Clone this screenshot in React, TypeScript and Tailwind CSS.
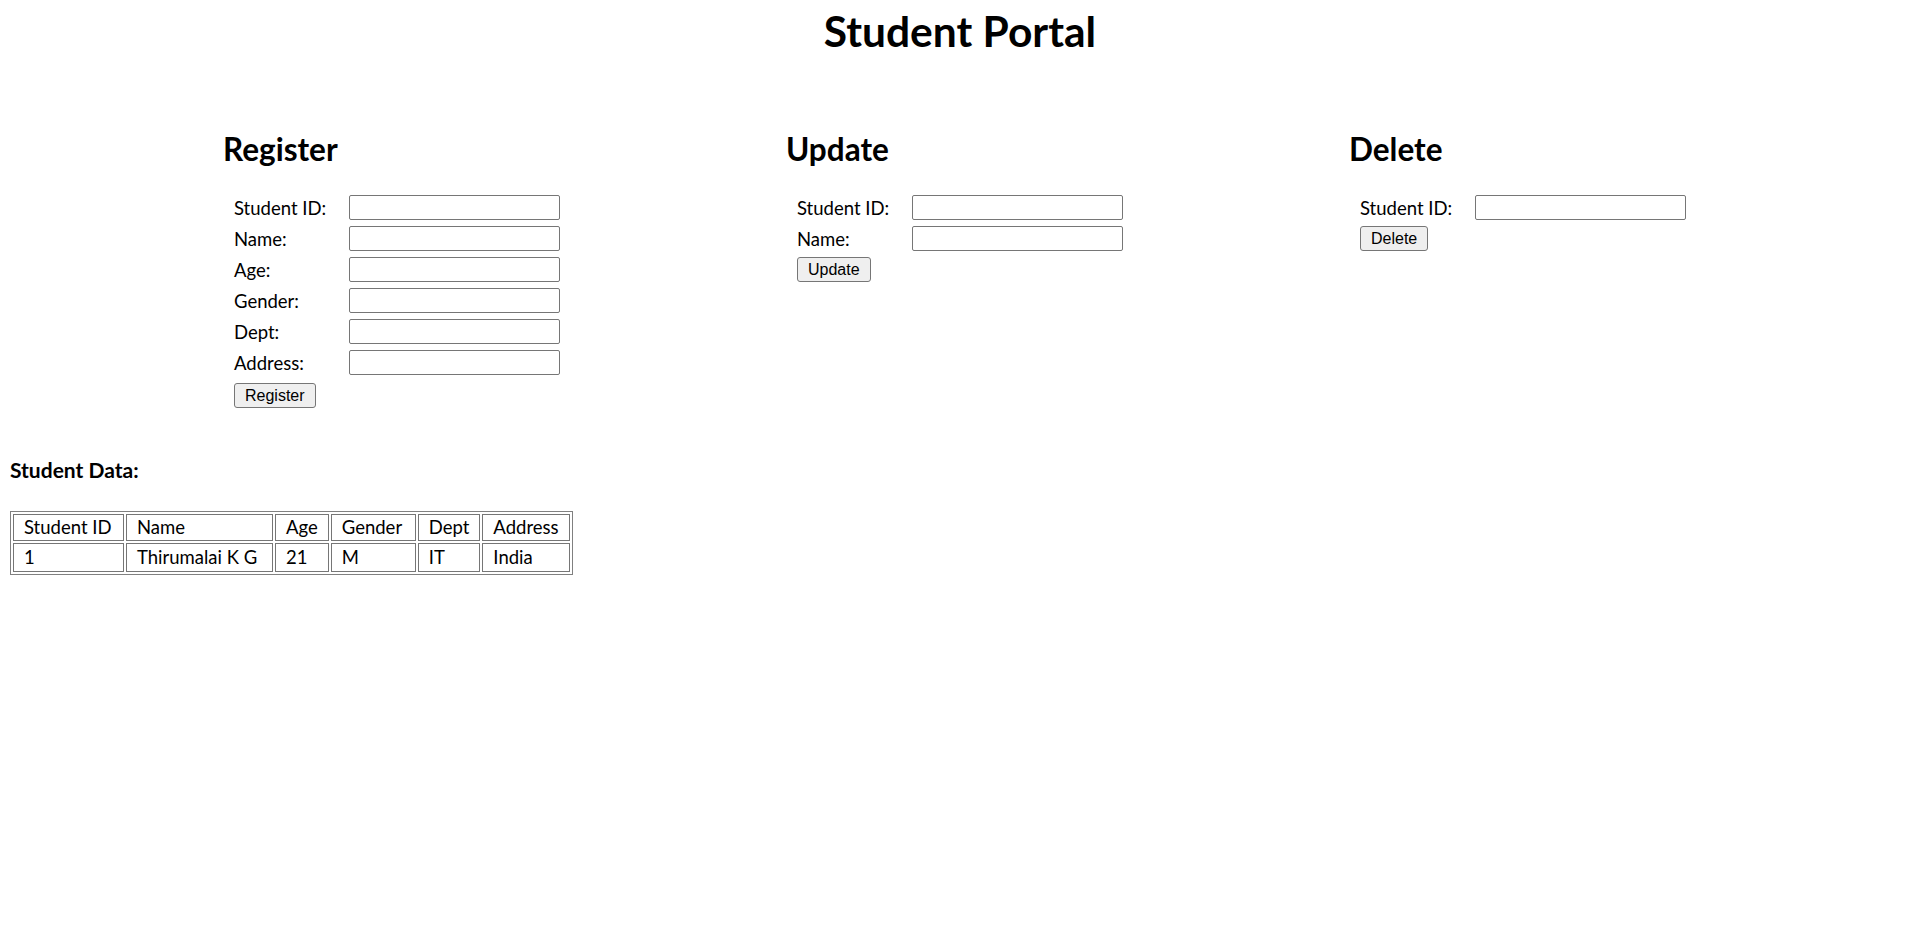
import React from "react";

const Field = ({ label }: { label: string }) => (
  <div className="flex h-[25px] items-center">
    <label className="w-[115px] text-[18.5px] leading-[22px]">{label}</label>
    <input
      type="text"
      className="h-[25px] w-[211px] rounded-[2px] border border-[#767676] bg-white px-[2px] outline-none"
    />
  </div>
);

const Btn = ({ children, extra = "" }: { children: React.ReactNode; extra?: string }) => (
  <button
    className={
      "h-[25px] self-start rounded-[3px] border border-[#767676] bg-[#efefef] px-[10px] font-['Liberation_Sans',Arial,sans-serif] text-[16px] leading-[18px] text-black " +
      extra
    }
  >
    {children}
  </button>
);

const Section = ({ title, fields, action, extra }: { title: string; fields: string[]; action: string; extra?: string }) => (
  <div className="w-[563px]">
    <h2 className="text-[31.5px] font-bold leading-[36px]">{title}</h2>
    <div className="mt-[28px] flex flex-col gap-[6px] pl-[11px]">
      {fields.map((f) => (
        <Field key={f} label={f} />
      ))}
      <Btn extra={extra}>{action}</Btn>
    </div>
  </div>
);

const headers = [
  { name: "Student ID", w: "w-[111px]" },
  { name: "Name", w: "w-[147px]" },
  { name: "Age", w: "w-[52px]" },
  { name: "Gender", w: "w-[85px]" },
  { name: "Dept", w: "w-[62px]" },
  { name: "Address", w: "w-[84px]" },
];

const rows = [["1", "Thirumalai K G", "21", "M", "IT", "India"]];

export default function App() {
  return (
    <div className="min-h-[937px] bg-white font-['Lato',sans-serif] text-black">
      <h1 className="pt-[6px] text-center text-[42.5px] font-bold leading-[50px]">Student Portal</h1>

      <div className="mt-[75px] flex pl-[223px]">
        <Section
          title="Register"
          fields={["Student ID:", "Name:", "Age:", "Gender:", "Dept:", "Address:"]}
          action="Register"
          extra="mt-[2px]"
        />
        <Section title="Update" fields={["Student ID:", "Name:"]} action="Update" />
        <Section title="Delete" fields={["Student ID:"]} action="Delete" />
      </div>

      <div className="pl-[10px]">
        <h3 className="mt-[50px] text-[21px] font-bold leading-[24px]">Student Data:</h3>
        <table className="mt-[29px] border-separate border-spacing-[2px] border border-[#808080]">
          <thead>
            <tr>
              {headers.map((h) => (
                <th
                  key={h.name}
                  className={"border border-[#767676] px-[10px] py-[2px] text-left text-[18.5px] font-normal leading-[21px] " + h.w}
                >
                  {h.name}
                </th>
              ))}
            </tr>
          </thead>
          <tbody>
            {rows.map((r, i) => (
              <tr key={i}>
                {r.map((c, j) => (
                  <td key={j} className="border border-[#767676] px-[10px] py-[3px] text-[18.5px] leading-[21px]">
                    {c}
                  </td>
                ))}
              </tr>
            ))}
          </tbody>
        </table>
      </div>
    </div>
  );
}
